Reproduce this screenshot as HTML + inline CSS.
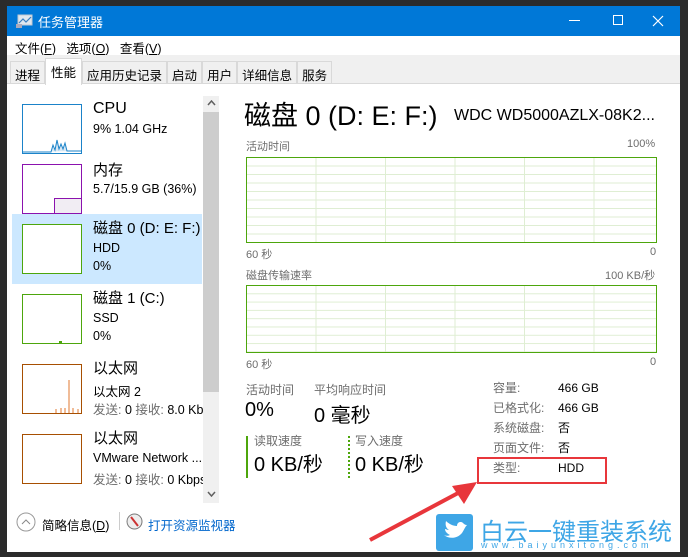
<!DOCTYPE html><html><head><meta charset="utf-8"><style>
*{margin:0;padding:0;box-sizing:border-box}
body{width:688px;height:557px;background:#2b2b2b;position:relative;overflow:hidden;font-family:"Liberation Sans","Noto Sans CJK SC",sans-serif;color:#000}
.a{position:absolute;white-space:nowrap}
.win{position:absolute;left:7px;top:6px;width:673px;height:546px;background:#fff}
.title{position:absolute;left:0;top:0;width:673px;height:30px;background:#0078d7;color:#fff}
.g{position:absolute;border:1px solid #4da60c;background-color:#fff;
background-image:linear-gradient(#dfeed3 1px,transparent 1px),linear-gradient(90deg,#dfeed3 1px,transparent 1px);}
.thumb{position:absolute;left:22px;width:60px;height:50px;border:1px solid #4da60c;background:#fff}
.gray{color:#6d6d6d}
.t{font-size:15px}
</style></head><body>
<div class="win">
<div class="title">
<svg class="a" style="left:9px;top:8px" width="17" height="15"><rect x="2" y="1" width="14" height="10" fill="#dfe8f0" stroke="#c0c8d0"/><polyline points="3,9 7,5 10,8 15,3" fill="none" stroke="#3a7fc0" stroke-width="1.2"/><rect x="0" y="10" width="6" height="4" fill="#aab"/></svg>
<div class="a" style="left:31px;top:6px;font-size:13px">任务管理器</div>
<div class="a" style="left:562px;top:14px;width:11px;height:1px;background:#fff"></div>
<div class="a" style="left:606px;top:9px;width:10px;height:10px;border:1px solid #fff"></div>
<svg class="a" style="left:645px;top:9px" width="12" height="12"><path d="M1 1L11 11M11 1L1 11" stroke="#fff" stroke-width="1.2"/></svg>
</div>
<div class="a" style="left:8px;top:32px;font-size:12.5px">文件(<u>F</u>)&nbsp;&nbsp;&nbsp;选项(<u>O</u>)&nbsp;&nbsp;&nbsp;查看(<u>V</u>)</div>
<div class="a" style="left:0;top:49px;width:673px;height:29px;background:#f0f0f0;border-bottom:1px solid #d9d9d9"></div>
<div class="a" style="left:3px;top:55px;height:23px;font-size:12.5px;display:flex">
<div style="border:1px solid #d9d9d9;padding:3px 4px;background:#f0f0f0">进程</div>
<div style="border:1px solid #d9d9d9;border-bottom:none;padding:3px 5px;background:#fff;margin-top:-3px;height:27px">性能</div>
<div style="border:1px solid #d9d9d9;padding:3px 4px">应用历史记录</div>
<div style="border:1px solid #d9d9d9;padding:3px 4px">启动</div>
<div style="border:1px solid #d9d9d9;padding:3px 4px">用户</div>
<div style="border:1px solid #d9d9d9;padding:3px 4px">详细信息</div>
<div style="border:1px solid #d9d9d9;padding:3px 4px">服务</div>
</div>
<!-- left list -->
<div class="a" style="left:5px;top:208px;width:190px;height:70px;background:#cce8ff"></div>
<div class="thumb" style="top:98px;border-color:#1b83c9;left:15px"><svg width="58" height="48" style="position:absolute;left:0;top:0"><polyline points="0,47 28,47 30,40 32,45 34,35 36,44 38,39 40,44 42,38 44,46 58,46" fill="#d7e8f5" stroke="#1b83c9"/></svg></div>
<div class="a" style="left:86px;top:94px;font-size:16px">CPU</div>
<div class="a" style="left:86px;top:116px;font-size:12.5px">9% 1.04 GHz</div>
<div class="thumb" style="top:158px;border-color:#8b12ae;left:15px"><div style="position:absolute;left:31px;top:33px;width:27px;height:15px;background:#f1edf3;border-top:1px solid #8b12ae;border-left:1px solid #8b12ae"></div></div>
<div class="a t" style="left:86px;top:153px">内存</div>
<div class="a" style="left:86px;top:176px;font-size:12.5px">5.7/15.9 GB (36%)</div>
<div class="thumb" style="top:218px;left:15px"></div>
<div class="a t" style="left:86px;top:211px;width:110px;overflow:hidden">磁盘 0 (D: E: F:)</div>
<div class="a" style="left:86px;top:235px;font-size:12.5px">HDD</div>
<div class="a" style="left:86px;top:253px;font-size:12.5px">0%</div>
<div class="thumb" style="top:288px;left:15px"><div style="position:absolute;left:36px;bottom:0;width:3px;height:2px;background:#4da60c"></div></div>
<div class="a t" style="left:86px;top:281px">磁盘 1 (C:)</div>
<div class="a" style="left:86px;top:305px;font-size:12.5px">SSD</div>
<div class="a" style="left:86px;top:323px;font-size:12.5px">0%</div>
<div class="thumb" style="top:358px;left:15px;border-color:#a74f01"><svg width="58" height="48" style="position:absolute"><path d="M46 15V48M33 44V48M38 43V48M42 43V48M50 43V48M55 44V48" stroke="#e07a30"/></svg></div>
<div class="a t" style="left:86px;top:351px">以太网</div>
<div class="a" style="left:86px;top:375px;font-size:12.5px">以太网 2</div>
<div class="a gray" style="left:86px;top:393px;font-size:12.5px;width:110px;overflow:hidden">发送: <span style="color:#000">0</span> 接收: <span style="color:#000">8.0 Kbps</span></div>
<div class="thumb" style="top:428px;left:15px;border-color:#a74f01"></div>
<div class="a t" style="left:86px;top:421px">以太网</div>
<div class="a" style="left:86px;top:445px;font-size:12.5px;width:110px;overflow:hidden">VMware Network ...</div>
<div class="a gray" style="left:86px;top:463px;font-size:12.5px;width:110px;overflow:hidden">发送: <span style="color:#000">0</span> 接收: <span style="color:#000">0 Kbps</span></div>
<!-- scrollbar -->
<div class="a" style="left:196px;top:90px;width:16px;height:407px;background:#f0f0f0"></div>
<div class="a" style="left:196px;top:106px;width:16px;height:280px;background:#cdcdcd"></div>
<svg class="a" style="left:200px;top:94px" width="9" height="6"><path d="M1 5L4.5 1L8 5" fill="none" stroke="#606060" stroke-width="1.5"/></svg>
<svg class="a" style="left:200px;top:485px" width="9" height="6"><path d="M1 1L4.5 5L8 1" fill="none" stroke="#606060" stroke-width="1.5"/></svg>
<!-- right -->
<div class="a" style="left:237px;top:88px;font-size:27px">磁盘 0 (D: E: F:)</div>
<div class="a" style="left:447px;top:101px;font-size:16px">WDC WD5000AZLX-08K2...</div>
<div class="a gray" style="left:239px;top:132px;font-size:11px">活动时间</div>
<div class="a gray" style="left:620px;top:132px;font-size:11px">100%</div>
<div class="g" style="left:239px;top:151px;width:411px;height:86px;background-size:100% 8.5px,69.5px 100%;background-position:0 -1px,-1px 0"></div>
<div class="a gray" style="left:239px;top:240px;font-size:11px">60 秒</div>
<div class="a gray" style="left:643px;top:240px;font-size:11px">0</div>
<div class="a gray" style="left:239px;top:261px;font-size:11px">磁盘传输速率</div>
<div class="a gray" style="left:598px;top:261px;font-size:11px">100 KB/秒</div>
<div class="g" style="left:239px;top:279px;width:411px;height:68px;background-size:100% 8.3px,69.5px 100%;background-position:0 -1px,-1px 0"></div>
<div class="a gray" style="left:239px;top:350px;font-size:11px">60 秒</div>
<div class="a gray" style="left:643px;top:350px;font-size:11px">0</div>
<div class="a gray" style="left:239px;top:375px;font-size:12px">活动时间</div>
<div class="a gray" style="left:307px;top:375px;font-size:12px">平均响应时间</div>
<div class="a" style="left:238px;top:393px;font-size:20px">0%</div>
<div class="a" style="left:307px;top:393px;font-size:20px">0 毫秒</div>
<div class="a" style="left:239px;top:430px;width:2px;height:42px;background:#4da60c"></div>
<div class="a gray" style="left:247px;top:426px;font-size:12px">读取速度</div>
<div class="a" style="left:247px;top:442px;font-size:20px">0 KB/秒</div>
<div class="a" style="left:341px;top:430px;width:0;height:42px;border-left:2px dotted #4da60c"></div>
<div class="a gray" style="left:348px;top:426px;font-size:12px">写入速度</div>
<div class="a" style="left:348px;top:442px;font-size:20px">0 KB/秒</div>
<div class="a gray" style="left:486px;top:372px;font-size:12px;line-height:20px">容量:<br>已格式化:<br>系统磁盘:<br>页面文件:<br>类型:</div>
<div class="a" style="left:551px;top:372px;font-size:12px;line-height:20px">466 GB<br>466 GB<br>否<br>否<br>HDD</div>
<div class="a" style="left:0;top:497px;width:673px;height:49px;background:#fff"></div>
<svg class="a" style="left:9px;top:506px" width="20" height="20"><circle cx="10" cy="10" r="9" fill="none" stroke="#999"/><path d="M6 12L10 8L14 12" fill="none" stroke="#888"/></svg>
<div class="a" style="left:35px;top:509px;font-size:12.5px">简略信息(<u>D</u>)</div>
<div class="a" style="left:112px;top:506px;width:1px;height:18px;background:#ccc"></div>
<svg class="a" style="left:119px;top:507px" width="17" height="17"><circle cx="8.5" cy="8.5" r="7.5" fill="#eee" stroke="#777"/><path d="M5 4L12 13" stroke="#c33" stroke-width="2"/></svg>
<div class="a" style="left:141px;top:509px;font-size:12.5px;color:#0066cc">打开资源监视器</div>
</div>
<!-- overlays -->
<div class="a" style="left:477px;top:457px;width:130px;height:27px;border:2px solid #e8363b"></div>
<svg class="a" style="left:360px;top:478px" width="120" height="70"><path d="M10 62L100 14" stroke="#e8363b" stroke-width="4"/><polygon points="117,4 92,8 104,26" fill="#e8363b"/></svg>
<div class="a" style="left:436px;top:514px;width:37px;height:37px;background:#3ea6e6;border-radius:3px"></div>
<svg class="a" style="left:441px;top:519px" width="28" height="26"><path d="M3 16C8 20 16 20 21 14C23 11 24 8 26 6C24 6 23 5 22 4C20 2 16 3 16 7C12 7 8 5 5 2C4 6 5 9 8 11C6 11 5 10 4 10C4 13 7 15 9 16C7 17 5 17 3 16Z" fill="#fff"/></svg>
<div class="a" style="left:480px;top:512px;font-size:24px;color:#3ea6e6;letter-spacing:0px">白云一键重装系统</div>
<div class="a" style="left:481px;top:540px;font-size:9px;color:#3ea6e6;letter-spacing:4px">www.baiyunxitong.com</div>
</body></html>
